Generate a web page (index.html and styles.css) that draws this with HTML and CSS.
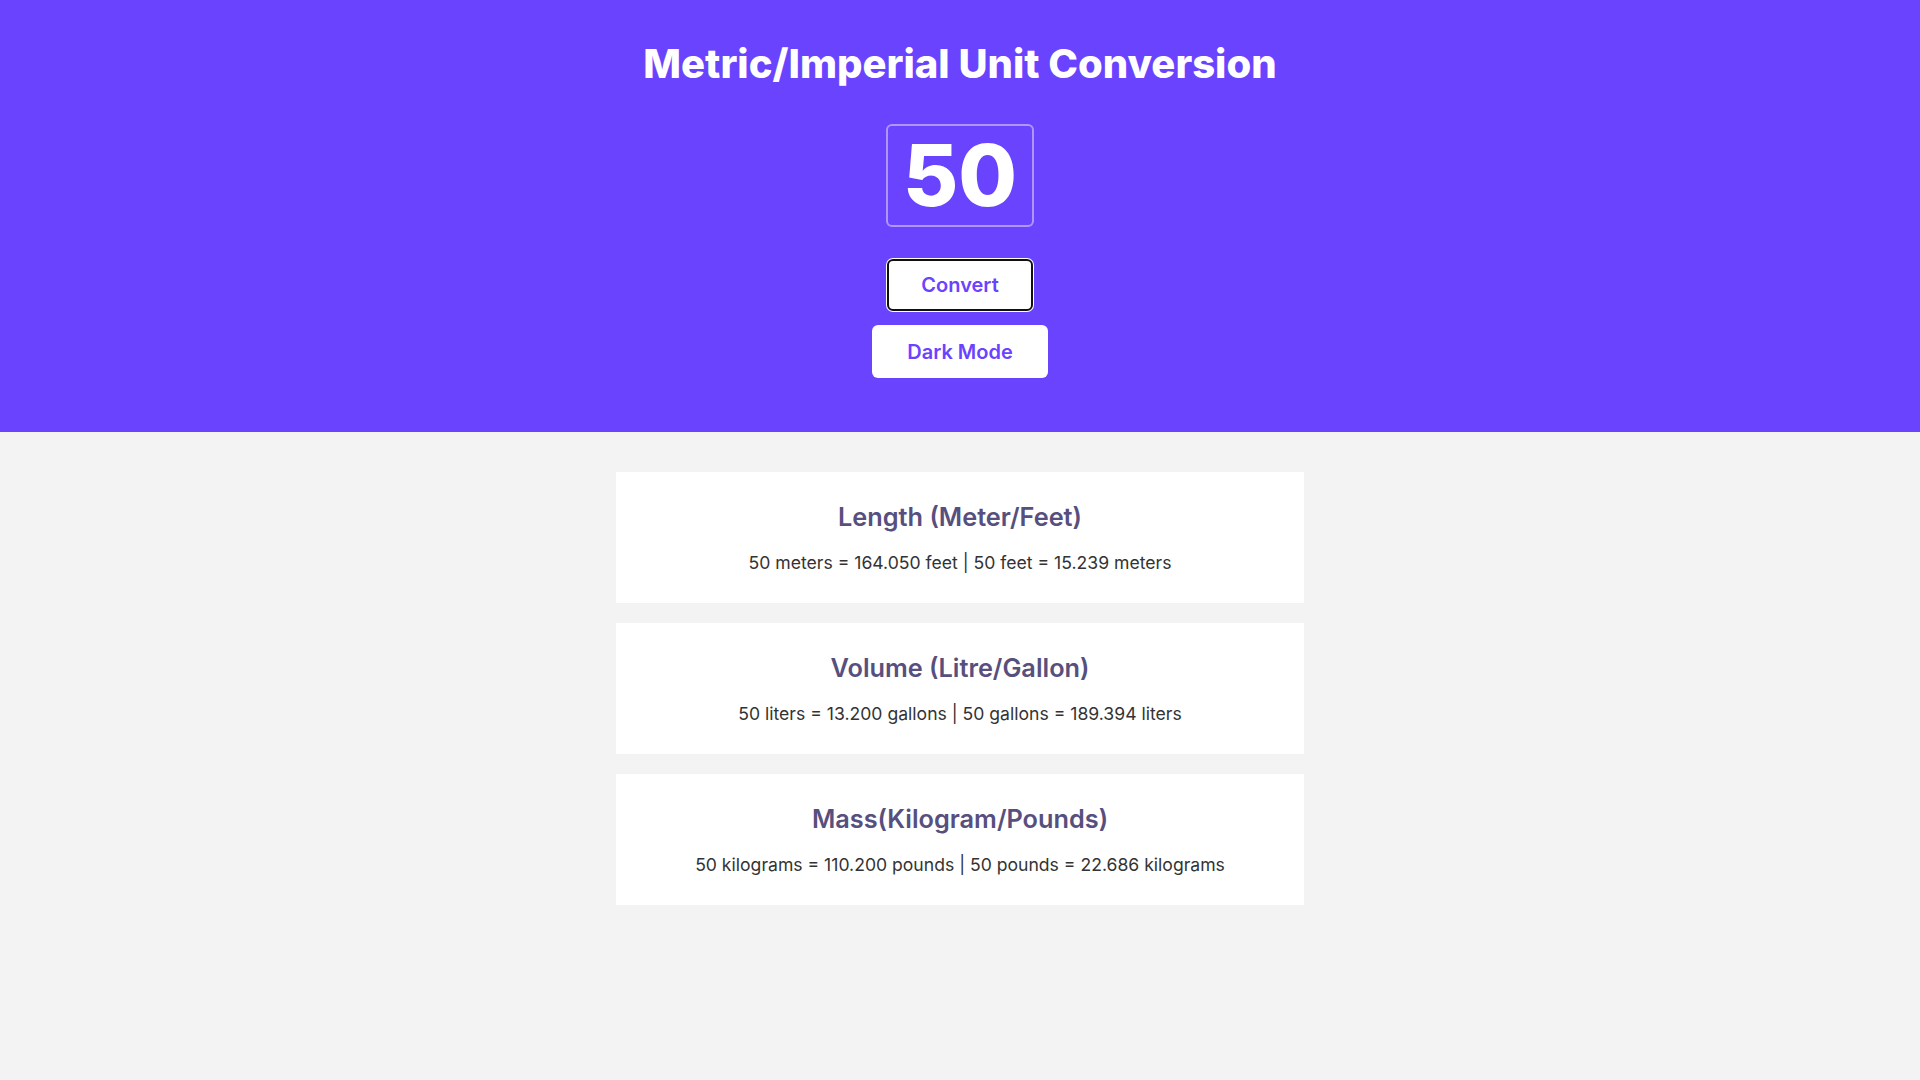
FILE: index.html
```html
<!DOCTYPE html>
<html lang="en">
<head>
<meta charset="utf-8">
<title>Unit Conversion</title>
<link rel="stylesheet" href="styles.css">
</head>
<body>
<header class="hero">
  <h1 class="title">Metric/Imperial Unit Conversion</h1>
  <input class="num-input" type="text" value="50">
  <button class="btn btn-convert">Convert</button>
  <button class="btn btn-dark">Dark Mode</button>
</header>
<main class="results">
  <section class="card">
    <h2 class="card-title">Length (Meter/Feet)</h2>
    <p class="card-text">50 meters = 164.050 feet | 50 feet = 15.239 meters</p>
  </section>
  <section class="card">
    <h2 class="card-title">Volume (Litre/Gallon)</h2>
    <p class="card-text">50 liters = 13.200 gallons | 50 gallons = 189.394 liters</p>
  </section>
  <section class="card">
    <h2 class="card-title">Mass(Kilogram/Pounds)</h2>
    <p class="card-text">50 kilograms = 110.200 pounds | 50 pounds = 22.686 kilograms</p>
  </section>
</main>
</body>
</html>
```
FILE: styles.css
```css
* { box-sizing: border-box; }
html, body { margin: 0; padding: 0; }
body {
  background: #f3f3f3;
  font-family: Inter, "Noto Sans", sans-serif;
  min-height: 100vh;
}
.hero {
  background: #6a43ff;
  display: flex;
  flex-direction: column;
  align-items: center;
  padding: 40px 0 54px;
}
.title {
  margin: 0;
  color: #ffffff;
  font-size: 40px;
  font-weight: 800;
  letter-spacing: 0;
  line-height: 48px;
}
.num-input {
  margin-top: 36px;
  width: 148px;
  height: 103px;
  background: transparent;
  border: 2px solid rgba(255, 255, 255, 0.45);
  border-radius: 6px;
  color: #ffffff;
  font-family: Inter, "Noto Sans", sans-serif;
  font-size: 85px;
  font-weight: 800;
  text-align: center;
  padding: 0;
  outline: none;
}
.btn {
  font-family: Inter, "Noto Sans", sans-serif;
  font-size: 20px;
  font-weight: 600;
  color: #6a43ff;
  background: #ffffff;
  border-radius: 6px;
  cursor: pointer;
}
.btn-convert {
  margin-top: 32px;
  width: 146px;
  height: 52px;
  border: 2px solid #101010;
  box-shadow: 0 0 0 1px #ffffff;
}
.btn-dark {
  margin-top: 14px;
  width: 176px;
  height: 53px;
  border: none;
}
.results {
  display: flex;
  flex-direction: column;
  align-items: center;
  gap: 20px;
  padding-top: 40px;
}
.card {
  width: 688px;
  height: 131px;
  background: #ffffff;
  display: flex;
  flex-direction: column;
  align-items: center;
  padding-top: 29px;
}
.card-title {
  margin: 0;
  color: #574f7d;
  font-size: 25.3px;
  font-weight: 600;
  line-height: 32px;
}
.card-text {
  margin: 19px 0 0;
  color: #333333;
  font-size: 17.6px;
  font-weight: 400;
  line-height: 22px;
}
```
